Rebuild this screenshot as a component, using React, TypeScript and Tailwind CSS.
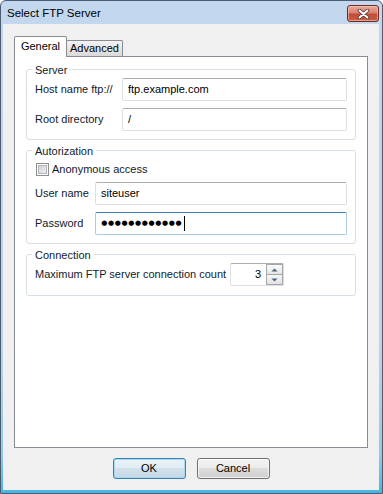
import React from "react";

function TextBox({ value, className = "" }: { value: string; className?: string }) {
  return (
    <div
      className={
        "h-[23px] flex items-center rounded-[2px] border border-[#dbdfe6] border-t-[#abadb3] bg-white pl-[5px] text-black " +
        className
      }
    >
      {value}
    </div>
  );
}

function Group({ title, children, className = "" }: { title: string; children: React.ReactNode; className?: string }) {
  return (
    <div className={"relative rounded-[3px] border border-[#d5dfe5] px-[8px] " + className}>
      <span className="absolute left-[5px] top-[-7px] bg-white px-[3px] leading-[14px] text-[#111a2e]">{title}</span>
      {children}
    </div>
  );
}

export default function App() {
  const dots = Array.from({ length: 12 });
  return (
    <div className="w-[383px] h-[494px] bg-white font-['Liberation_Sans',Arial,sans-serif] text-[11px] text-[#111a2e]">
      <div className="w-full h-full flex flex-col rounded-t-[6px] border border-[#4b5b70] bg-[linear-gradient(#c3d7ee,#bcd3ec_70%,#8fcbea_92%,#45b5e6)]">
        {/* Title bar */}
        <div className="h-[23px] flex shrink-0">
          <div className="pl-[6px] pt-[5px] text-black text-[11.5px] leading-[14px]">Select FTP Server</div>
          <div className="ml-auto mr-[3px] mt-[4px] w-[32px] h-[17px] rounded-[3px] border border-[#6b2a24] bg-[linear-gradient(#e9a999,#d98170_45%,#c24a3b_55%,#c9603f)] shadow-[inset_0_0_0_1px_rgba(255,210,200,0.55)] flex items-center justify-center">
            <svg width="13" height="10" viewBox="0 0 13 10">
              <path d="M2.5 1.5 L10.5 8.5 M10.5 1.5 L2.5 8.5" stroke="#4a3030" strokeWidth="3.6" strokeLinecap="round" />
              <path d="M2.5 1.5 L10.5 8.5 M10.5 1.5 L2.5 8.5" stroke="#ffffff" strokeWidth="2" strokeLinecap="round" />
            </svg>
          </div>
        </div>

        {/* Client */}
        <div className="flex-1 pl-[2px] pr-[3px] pb-[3px] flex">
          <div className="flex-1 bg-[#f0f0f0] px-[11px] pt-[12px] flex flex-col">
            {/* Tabs */}
            <div className="h-[20px] flex items-end">
              <div className="relative z-10 -mb-px h-[21px] w-[53px] border border-b-0 border-[#898c95] bg-white rounded-t-[2px] flex items-center justify-center pb-[1px] text-black">
                General
              </div>
              <div className="-ml-px h-[16px] w-[57px] border border-b-0 border-[#898c95] bg-[linear-gradient(#f3f3f3,#e6e6e6_50%,#d9d9d9)] rounded-t-[2px] flex items-center justify-center text-black">
                Advanced
              </div>
            </div>

            {/* Panel */}
            <div className="h-[392px] border border-[#898c95] bg-white px-[11px] pt-[12px] flex flex-col gap-[10px]">
              <Group title="Server" className="pt-[8px] pb-[8px]">
                <div className="flex flex-col gap-[7px]">
                  <div className="flex items-center">
                    <div className="w-[87px]">Host name ftp://</div>
                    <TextBox value="ftp.example.com" className="flex-1" />
                  </div>
                  <div className="flex items-center">
                    <div className="w-[87px]">Root directory</div>
                    <TextBox value="/" className="flex-1" />
                  </div>
                </div>
              </Group>

              <Group title="Autorization" className="pt-[8px] pb-[8px]">
                <div className="h-[20px] flex items-center">
                  <div className="ml-[1px] w-[13px] h-[13px] border border-[#8e8f8f] bg-white p-[1px]">
                    <div className="w-full h-full border border-[#b4b7bb] bg-[linear-gradient(135deg,#cfd2d6,#eceef0)]" />
                  </div>
                  <span className="ml-[3px] text-[#111a2e]">Anonymous access</span>
                </div>
                <div className="mt-[3px] flex flex-col gap-[7px]">
                  <div className="flex items-center">
                    <div className="w-[60px]">User name</div>
                    <TextBox value="siteuser" className="flex-1" />
                  </div>
                  <div className="flex items-center">
                    <div className="w-[60px]">Password</div>
                    <div className="flex-1 h-[23px] flex items-center rounded-[2px] border border-[#a9cbe6] border-t-[#3d7bad] bg-white pl-[5px]">
                      {dots.map((_, i) => (
                        <span
                          key={i}
                          className="inline-block w-[6.75px] text-center text-[7px] leading-none text-black font-['DejaVu_Sans',sans-serif]"
                        >
                          ●
                        </span>
                      ))}
                      <span className="ml-[2px] w-px h-[15px] bg-black" />
                    </div>
                  </div>
                </div>
              </Group>

              <Group title="Connection" className="pt-[8px] pb-[9px]">
                <div className="flex items-center">
                  <div className="w-[195px]">Maximum FTP server connection count</div>
                  <div className="w-[54px] h-[23px] flex rounded-[2px] border border-[#dbdfe6] border-t-[#abadb3] bg-white">
                    <div className="flex-1 flex items-center justify-end pr-[5px] text-black">3</div>
                    <div className="w-[17px] flex flex-col">
                      <div className="h-[11px] border border-[#a6a6a6] bg-[linear-gradient(#fbfbfb,#e6e6e6)] flex items-center justify-center">
                        <svg width="7" height="4" viewBox="0 0 7 4">
                          <path d="M0.5 3.5 L3.5 0.5 L6.5 3.5 Z" fill="#4d6185" />
                        </svg>
                      </div>
                      <div className="h-[10px] border border-t-0 border-[#a6a6a6] bg-[linear-gradient(#f7f7f7,#e2e2e2)] flex items-center justify-center">
                        <svg width="7" height="4" viewBox="0 0 7 4">
                          <path d="M0.5 0.5 L3.5 3.5 L6.5 0.5 Z" fill="#4d6185" />
                        </svg>
                      </div>
                    </div>
                  </div>
                </div>
              </Group>
            </div>

            {/* Buttons */}
            <div className="mt-[10px] flex justify-center gap-[11px]">
              <button className="w-[73px] h-[21px] rounded-[3px] border border-[#3c7fb1] bg-[linear-gradient(#eaf3f9,#e0ebf3_50%,#d2e0ea_50%,#c8d9e5)] shadow-[inset_0_0_0_1px_rgba(160,215,245,0.9)] text-black leading-none">
                OK
              </button>
              <button className="w-[73px] h-[21px] rounded-[3px] border border-[#707070] bg-[linear-gradient(#f2f2f2,#ebebeb_50%,#dddddd_50%,#cfcfcf)] shadow-[inset_0_0_0_1px_rgba(255,255,255,0.7)] text-black leading-none">
                Cancel
              </button>
            </div>
          </div>
        </div>
      </div>
    </div>
  );
}
